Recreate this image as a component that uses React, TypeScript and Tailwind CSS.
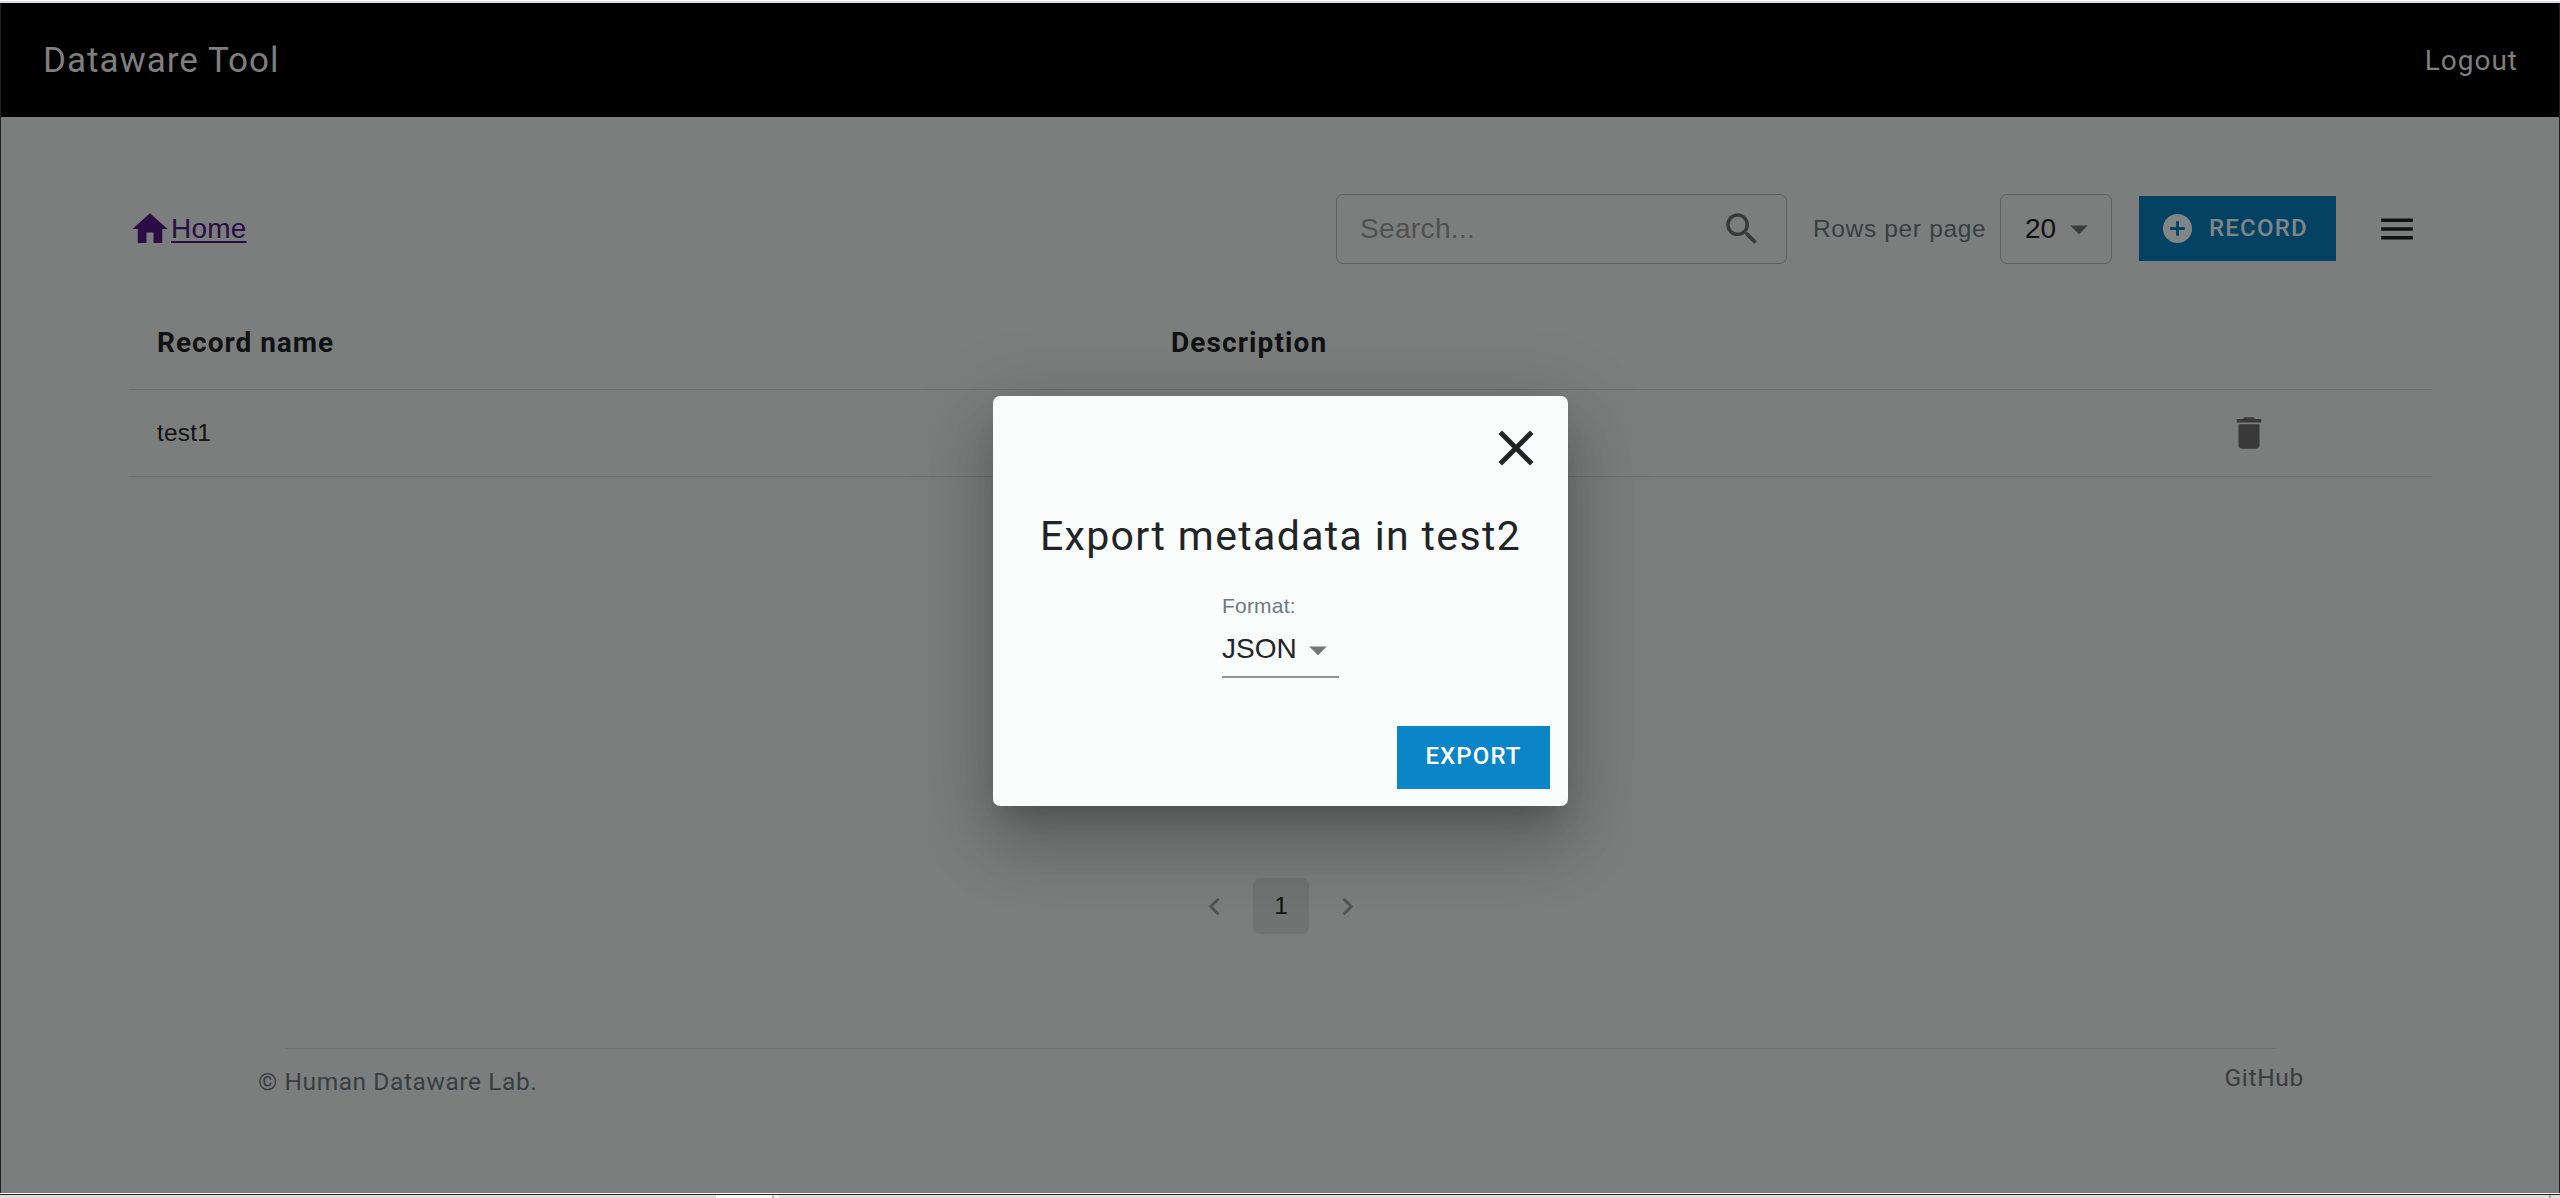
import React from "react";

const ICONS = {
  home: "M10 20v-6h4v6h5v-8h3L12 3 2 12h3v8z",
  search:
    "M15.5 14h-.79l-.28-.27C15.41 12.59 16 11.11 16 9.5 16 5.91 13.09 3 9.5 3S3 5.91 3 9.5 5.91 16 9.5 16c1.61 0 3.09-.59 4.23-1.57l.27.28v.79l5 4.99L20.49 19l-4.99-5zm-6 0C7.01 14 5 11.99 5 9.5S7.01 5 9.5 5 14 7.01 14 9.5 11.99 14 9.5 14z",
  caret: "M7 10l5 5 5-5z",
  addCircle:
    "M12 2C6.48 2 2 6.48 2 12s4.48 10 10 10 10-4.48 10-10S17.52 2 12 2zm5 11h-4v4h-2v-4H7v-2h4V7h2v4h4v2z",
  menu: "M3 18h18v-2H3v2zm0-5h18v-2H3v2zm0-7v2h18V6H3z",
  trash: "M6 19c0 1.1.9 2 2 2h8c1.1 0 2-.9 2-2V7H6v12zM19 4h-3.5l-1-1h-5l-1 1H5v2h14V4z",
  close:
    "M19 6.41L17.59 5 12 10.59 6.41 5 5 6.41 10.59 12 5 17.59 6.41 19 12 13.41 17.59 19 19 17.59 13.41 12z",
  prev: "M15.41 7.41L14 6l-6 6 6 6 1.41-1.41L10.83 12z",
  next: "M10 6L8.59 7.41 13.17 12l-4.58 4.59L10 18l6-6z",
};

function Icon({ name, className }: { name: keyof typeof ICONS; className: string }) {
  return (
    <svg viewBox="0 0 24 24" fill="currentColor" className={`block shrink-0 ${className}`}>
      <path d={ICONS[name]} />
    </svg>
  );
}

function Header() {
  return (
    <header className="flex h-[114px] items-center justify-between bg-black pr-[41px] pl-[42px] font-[Roboto,sans-serif] text-[#7f7f7f]">
      <h1 className="pt-[2px] text-[35px] leading-[40px] tracking-[1px]">Dataware Tool</h1>
      <a className="pt-[2px] text-[28px] leading-[36px] tracking-[1px]">Logout</a>
    </header>
  );
}

function Toolbar() {
  return (
    <div className="flex h-[70px] items-center">
      <a className="flex items-center text-[#2a0c47]">
        <Icon name="home" className="size-[42px]" />
        <span className="text-[28px] leading-[40px] tracking-[0.2px] underline decoration-2 underline-offset-[3px]">Home</span>
      </a>
      <div className="ml-auto flex h-[70px] w-[451px] items-center justify-between rounded-[7px] border border-[#5f6160] pr-[23px] pl-[23px]">
        <span className="text-[28px] tracking-[0.35px] text-[#4f5150]">Search...</span>
        <Icon name="search" className="size-[42px] text-[#393939]" />
      </div>
      <span className="ml-[26px] w-[187px] text-[24.5px] tracking-[0.65px] whitespace-nowrap text-[#363e42]">
        Rows per page
      </span>
      <div className="flex h-[70px] w-[112px] items-center rounded-[7px] border border-[#5f6160] pl-[24px] text-[28px] text-[#101112]">
        20
        <Icon name="caret" className="ml-[2px] size-[42px] text-[#3b3b3b]" />
      </div>
      <button className="mb-[2px] ml-[27px] flex h-[65px] w-[197px] items-center bg-[#044263] pl-[21px] font-[Roboto,sans-serif] text-[24px] font-medium tracking-[1.2px] text-[#828585]">
        <Icon name="addCircle" className="mr-[14px] size-[35px]" />
        RECORD
      </button>
      <Icon name="menu" className="ml-[40px] mr-[14px] size-[42px] text-[#101112]" />
    </div>
  );
}

function RecordTable() {
  return (
    <div className="mt-[32px] text-[#101112]">
      <div className="flex h-[94px] items-center border-b border-[#6f7170] pl-[28px] font-[Roboto,sans-serif] text-[28px] font-bold">
        <span className="w-[1014px] tracking-[1px]">Record name</span>
        <span className="tracking-[1.1px]">Description</span>
      </div>
      <div className="flex h-[87px] items-center justify-between border-b border-[#6f7170] pr-[162px] pl-[28px] text-[24.5px]">
        <span className="tracking-[0.2px]">test1</span>
        <Icon name="trash" className="size-[42px] text-[#393939]" />
      </div>
    </div>
  );
}

function Pagination() {
  return (
    <nav className="mt-[401px] flex items-center justify-center gap-[21px] pl-[2px] text-[#525453]">
      <Icon name="prev" className="size-[35px]" />
      <span className="flex size-[56px] items-center justify-center rounded-[7px] bg-[#717372] text-[24.5px] text-[#101112]">
        1
      </span>
      <Icon name="next" className="size-[35px]" />
    </nav>
  );
}

function Footer() {
  return (
    <footer className="mt-[114px] font-[Roboto,sans-serif] text-[#363e42]">
      <div className="mr-[283px] ml-[284px] border-t border-[#6f7170]" />
      <div className="flex justify-between pr-[255px] pl-[257px] text-[24.5px] leading-[32px]">
        <span className="pt-[17px] tracking-[0.58px]">© Human Dataware Lab.</span>
        <span className="pt-[13px] tracking-[0.7px]">GitHub</span>
      </div>
    </footer>
  );
}

function ExportDialog() {
  return (
    <div
      role="dialog"
      className="absolute top-[396px] left-[993px] flex h-[410px] w-[575px] flex-col rounded-[7px] bg-[#fafcfb] text-[#212426] shadow-[0_19px_26px_-12px_rgba(0,0,0,0.2),0_42px_66px_5px_rgba(0,0,0,0.14),0_16px_80px_14px_rgba(0,0,0,0.12)]"
    >
      <div className="flex justify-end pt-[22px] pr-[22px]">
        <Icon name="close" className="size-[60px]" />
      </div>
      <h2 className="mt-[33px] text-center font-[Roboto,sans-serif] text-[41px] leading-[50px] font-normal tracking-[1.35px] whitespace-nowrap">
        Export metadata in test2
      </h2>
      <div className="mt-[31px] ml-[229px] w-[117px] border-b-2 border-[#929493] pb-[6px]">
        <div className="text-[21px] leading-[28px] tracking-[0.2px] text-[#6b7a82]">Format:</div>
        <div className="mt-[8px] flex h-[42px] items-center text-[28px]">
          JSON
          <Icon name="caret" className="mt-[2px] size-[42px] text-[#757575]" />
        </div>
      </div>
      <button className="mt-[48px] mr-[18px] h-[63px] w-[153px] self-end bg-[#0a85c7] pb-[3px] font-[Roboto,sans-serif] text-[24px] font-medium tracking-[1.1px] text-white">
        EXPORT
      </button>
    </div>
  );
}

export default function App() {
  return (
    <div className="relative flex h-[1198px] w-[2560px] flex-col overflow-hidden bg-[#7c7e7d] font-['Liberation_Sans',Arial,sans-serif]">
      <div className="h-[3px] border-t border-white bg-[#dcdce4]" />
      <div className="h-[1190px] border-x border-[#222423]">
        <Header />
        <main className="pt-[77px] pr-[127px] pl-[128px]">
          <Toolbar />
          <RecordTable />
        </main>
        <Pagination />
        <Footer />
      </div>
      <div className="h-px bg-white" />
      <div className="h-px bg-[#222423]" />
      <div className="flex h-[3px] bg-[#dcdcda]">
        <div className="ml-[716px] w-[56px] bg-[#f6f6f5]" />
        <div className="w-[2px] bg-[#c0c0be]" />
        <div className="w-[5px] bg-[#ededec]" />
        <div className="ml-auto mr-[9px] w-[2px] bg-[#a8a8a6]" />
      </div>
      <ExportDialog />
    </div>
  );
}
